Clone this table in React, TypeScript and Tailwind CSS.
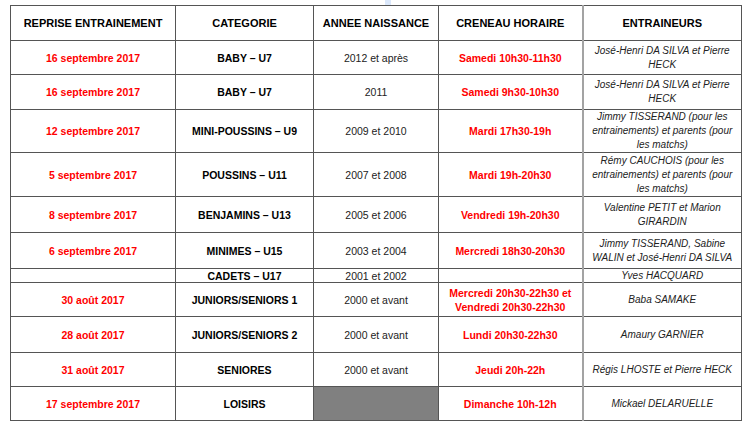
import React from "react";

interface Row {
  reprise: string;
  categorie: string;
  annee: string;
  creneau: string[];
  entraineurs: string[];
  h: string;
  grey?: boolean;
}

const rows: Row[] = [
  { reprise: "16 septembre 2017", categorie: "BABY – U7", annee: "2012 et après", creneau: ["Samedi 10h30-11h30"], entraineurs: ["José-Henri DA SILVA et Pierre", "HECK"], h: "h-[34px]" },
  { reprise: "16 septembre 2017", categorie: "BABY – U7", annee: "2011", creneau: ["Samedi 9h30-10h30"], entraineurs: ["José-Henri DA SILVA et Pierre", "HECK"], h: "h-[35px]" },
  { reprise: "12 septembre 2017", categorie: "MINI-POUSSINS – U9", annee: "2009 et 2010", creneau: ["Mardi 17h30-19h"], entraineurs: ["Jimmy TISSERAND (pour les", "entrainements) et parents (pour", "les matchs)"], h: "h-[43px]" },
  { reprise: "5 septembre 2017", categorie: "POUSSINS – U11", annee: "2007 et 2008", creneau: ["Mardi 19h-20h30"], entraineurs: ["Rémy CAUCHOIS (pour les", "entrainements) et parents (pour", "les matchs)"], h: "h-[44px]" },
  { reprise: "8 septembre 2017", categorie: "BENJAMINS – U13", annee: "2005 et 2006", creneau: ["Vendredi 19h-20h30"], entraineurs: ["Valentine PETIT et Marion", "GIRARDIN"], h: "h-[36px]" },
  { reprise: "6 septembre 2017", categorie: "MINIMES – U15", annee: "2003 et 2004", creneau: ["Mercredi 18h30-20h30"], entraineurs: ["Jimmy TISSERAND, Sabine", "WALIN et José-Henri DA SILVA"], h: "h-[36px]" },
  { reprise: "", categorie: "CADETS – U17", annee: "2001 et 2002", creneau: [], entraineurs: ["Yves HACQUARD"], h: "h-[14px] leading-[12px]" },
  { reprise: "30 août 2017", categorie: "JUNIORS/SENIORS 1", annee: "2000 et avant", creneau: ["Mercredi 20h30-22h30 et", "Vendredi 20h30-22h30"], entraineurs: ["Baba SAMAKE"], h: "h-[34px]" },
  { reprise: "28 août 2017", categorie: "JUNIORS/SENIORS 2", annee: "2000 et avant", creneau: ["Lundi 20h30-22h30"], entraineurs: ["Amaury GARNIER"], h: "h-[36px]" },
  { reprise: "31 août 2017", categorie: "SENIORES", annee: "2000 et avant", creneau: ["Jeudi 20h-22h"], entraineurs: ["Régis LHOSTE et Pierre HECK"], h: "h-[34px]" },
  { reprise: "17 septembre 2017", categorie: "LOISIRS", annee: "", creneau: ["Dimanche 10h-12h"], entraineurs: ["Mickael DELARUELLE"], h: "h-[34px]", grey: true },
];

const cell = "border border-[#555] text-center align-middle p-0";

export default function App() {
  return (
    <div className="w-[750px] h-[427px] bg-white relative overflow-hidden font-['Liberation_Sans',Arial,sans-serif]">
      {/* little blue mark above the table */}
      <div className="absolute left-[385px] top-0 w-[6px] h-[5px] bg-[#dbe8fb]" />
      <div className="pt-[5px] pl-[10px]">
        <table className="table-fixed border-collapse w-[731px] text-[10.5px] leading-[14px] text-[#222]">
          <colgroup>
            <col className="w-[165px]" />
            <col className="w-[138px]" />
            <col className="w-[125px]" />
            <col className="w-[144px]" />
            <col className="w-[159px]" />
          </colgroup>
          <thead>
            <tr className="h-[35px] text-[11px] font-bold text-black">
              <th className={cell}>REPRISE ENTRAINEMENT</th>
              <th className={cell}>CATEGORIE</th>
              <th className={cell}>ANNEE NAISSANCE</th>
              <th className={`${cell} border-r-2 border-r-[#a3a3a3]`}>CRENEAU HORAIRE</th>
              <th className={cell}>ENTRAINEURS</th>
            </tr>
          </thead>
          <tbody>
            {rows.map((r, i) => (
              <tr key={i} className={r.h}>
                <td className={`${cell} font-bold text-[#ff0000]`}>{r.reprise}</td>
                <td className={`${cell} font-bold text-black`}>{r.categorie}</td>
                <td className={`${cell} ${r.grey ? "bg-[#808080]" : ""}`}>{r.annee}</td>
                <td className={`${cell} border-r-2 border-r-[#a3a3a3] font-bold text-[#ff0000]`}>
                  {r.creneau.map((l, j) => (
                    <div key={j}>{l}</div>
                  ))}
                </td>
                <td className={`${cell} italic text-[10px]`}>
                  {r.entraineurs.map((l, j) => (
                    <div key={j}>{l}</div>
                  ))}
                </td>
              </tr>
            ))}
          </tbody>
        </table>
      </div>
    </div>
  );
}
